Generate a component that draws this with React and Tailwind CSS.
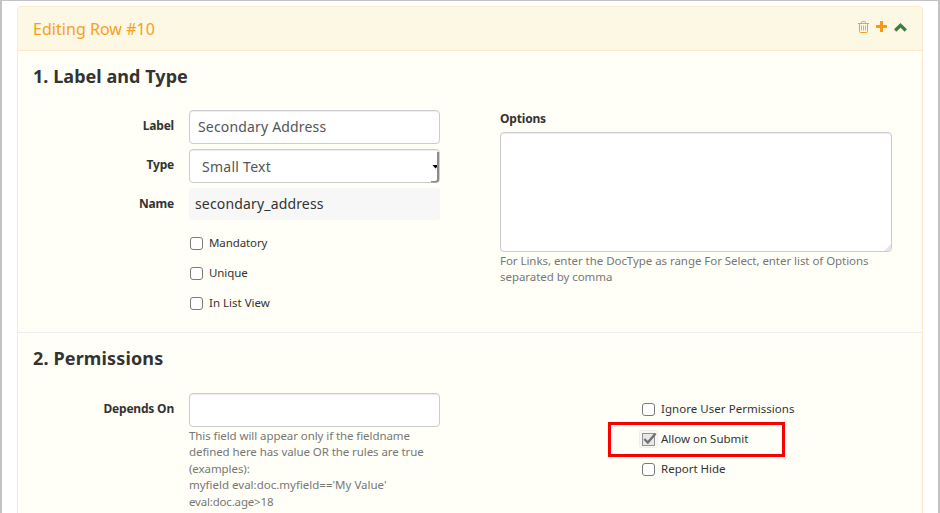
import React from "react";

function TrashIcon() {
  return (
    <svg className="mb-px h-[12px] w-[11px] shrink-0" viewBox="0 0 11 12" fill="none" stroke="#f5a11e">
      <path d="M0 2.5H11" />
      <path d="M3.5 2.5V1.3Q3.5 0.5 4.3 0.5H6.7Q7.5 0.5 7.5 1.3V2.5" />
      <path d="M1.5 3V10.5Q1.5 11.5 2.5 11.5H8.5Q9.5 11.5 9.5 10.5V3" />
      <path d="M3.5 4.5V9.5M5.5 4.5V9.5M7.5 4.5V9.5" strokeWidth="0.9" />
    </svg>
  );
}

function PlusIcon() {
  return (
    <svg className="h-[11px] w-[11px] shrink-0" viewBox="0 0 11 11" fill="#f7981c">
      <path d="M4 0.5Q4 0 4.5 0H6.5Q7 0 7 0.5V4H10.5Q11 4 11 4.5V6.5Q11 7 10.5 7H7V10.5Q7 11 6.5 11H4.5Q4 11 4 10.5V7H0.5Q0 7 0 6.5V4.5Q0 4 0.5 4H4Z" />
    </svg>
  );
}

function ChevronIcon() {
  return (
    <svg className="h-[9px] w-[13px] shrink-0" viewBox="0 0 13 9" fill="none" stroke="#3a8040" strokeWidth="3.2">
      <path d="M1.2 7.5L6.5 2.3L11.8 7.5" />
    </svg>
  );
}

function CheckRow({ children, checked }) {
  return (
    <label className="flex h-[30px] items-center text-[11.5px]">
      {checked ? (
        <span className="-ml-[2px] mr-[3px] flex h-[18px] w-[19px] items-center rounded-[2px] border border-[#eeeeec] bg-[#f8f8f3] pl-px">
          <svg className="h-[14px] w-[16px] shrink-0" viewBox="0 0 16 14" fill="none">
            <rect x="1.5" y="1.5" width="12" height="12" fill="#e8e8e8" stroke="#333" strokeDasharray="1 1" />
            <path d="M3.3 7L6.8 10.6L14.6 1.4" stroke="#707070" strokeWidth="2.3" />
          </svg>
        </span>
      ) : (
        <span className="mr-[6px] ml-px h-[13px] w-[13px] rounded-[3px] border border-[#7b7b7b] bg-white" />
      )}
      <span className="whitespace-nowrap text-[#333]">{children}</span>
    </label>
  );
}

function Field({ label, children }) {
  return (
    <div className="flex">
      <div className="mr-[15px] h-8 w-[141px] text-right text-[12px] font-bold leading-8 tracking-[-0.2px] text-[#333]">{label}</div>
      {children}
    </div>
  );
}

const box = "border border-[#ccc] rounded-[4px] bg-white shadow-[inset_0_1px_1px_rgba(0,0,0,0.075)]";

export default function App() {
  return (
    <div className="h-[513px] w-[940px] overflow-hidden border-x-2 border-t border-[#c3c3c3] bg-white pl-[15px] pt-[5px] font-['Noto_Sans',sans-serif] text-[#333]">
      <div className="h-[520px] w-[906px] rounded-t-[4px] border border-[#faebcc] bg-[#fffff8]">
        <header className="flex h-[44px] items-center rounded-t-[3px] border-b border-[#faebcc] bg-[#fcf8e3] pl-[15px] pr-[15px]">
          <h1 className="text-[16px] tracking-[0.04px] text-[#f5a11e]">Editing Row #10</h1>
          <div className="mb-[2px] ml-auto flex items-center">
            <TrashIcon />
            <span className="mb-[2px] ml-[7px]"><PlusIcon /></span>
            <span className="ml-[7px]"><ChevronIcon /></span>
          </div>
        </header>

        <section className="h-[282px] border-b border-[#eee] pl-[15px] pt-[13px]">
          <h2 className="h-[24px] text-[18px] font-bold leading-[24px] tracking-[0.05px]">1. Label and Type</h2>
          <div className="flex pt-[22px]">
            <div className="w-[407px]">
              <Field label="Label">
                <div className={`${box} h-[34px] w-[251px] pl-2 text-[14px] leading-[32px] tracking-[0.17px] text-[#555]`}>Secondary Address</div>
              </Field>
              <div className="pt-[5px]">
                <Field label="Type">
                  <div className={`${box} relative h-[34px] w-[251px] pl-3 text-[14px] leading-[33px] tracking-[0.27px] text-[#555]`}>
                    Small Text
                    <svg className="absolute right-0 top-px h-[32px] w-[8px]" viewBox="0 0 8 32">
                      <path d="M0 31.5V30H4Q6 30 6 28V1H8V29Q8 31.5 5 31.5H0Z" fill="#8c8c8c" />
                      <path d="M1.5 14H6V16L4.5 17.5Z" fill="#000" />
                    </svg>
                  </div>
                </Field>
              </div>
              <div className="pt-[5px]">
                <Field label="Name">
                  <div className="h-[32px] w-[251px] rounded-[3px] bg-[#f7f7f7] pl-[6px] text-[14px] leading-[31px] tracking-[0.16px] text-[#333]">secondary_address</div>
                </Field>
              </div>
              <div className="pl-[156px] pt-[8px]">
                <CheckRow><span className="tracking-[-0.1px]">Mandatory</span></CheckRow>
                <CheckRow><span className="tracking-[-0.1px]">Unique</span></CheckRow>
                <CheckRow>In List View</CheckRow>
              </div>
            </div>
            <div className="ml-[60px] w-[392px]">
              <div className="h-[22px] pt-px text-[12px] font-bold leading-[16px] tracking-[-0.18px]">Options</div>
              <div className={`${box} relative h-[120px]`}>
                <svg className="absolute bottom-0 right-0 h-[7px] w-[7px]" viewBox="0 0 7 7">
                  <path d="M7 0V4Q7 7 4 7H0Z" fill="#e6e6e6" />
                </svg>
              </div>
              <p className="whitespace-nowrap pt-px text-[11.5px] leading-[16.4px] tracking-[-0.05px] text-[#777]">For Links, enter the DocType as range For Select, enter list of Options<br />separated by comma</p>
            </div>
          </div>
        </section>

        <section className="pl-[15px] pt-[13px]">
          <h2 className="h-[24px] text-[18px] font-bold leading-[24px] tracking-[0.14px]">2. Permissions</h2>
          <div className="flex pt-[23px]">
            <div className="w-[407px]">
              <Field label="Depends On">
                <div className="w-[251px]">
                  <div className={`${box} h-[34px]`} />
                  <p className="whitespace-nowrap pt-px text-[11.5px] leading-[16.4px] tracking-[-0.08px] text-[#777]">
                    This field will appear only if the fieldname<br />
                    defined here has value OR the rules are true<br />
                    (examples):<br />
                    <span className="tracking-normal">myfield eval:doc.myfield=='My Value'</span><br />
                    <span className="tracking-[-0.18px]">eval:doc.age&gt;18</span>
                  </p>
                </div>
              </Field>
            </div>
            <div className="relative ml-[201px] pt-px">
              <CheckRow><span className="tracking-[0.04px]">Ignore User Permissions</span></CheckRow>
              <CheckRow checked>Allow on Submit</CheckRow>
              <CheckRow>Report Hide</CheckRow>
              <div className="absolute -left-[33px] top-[29px] h-[35px] w-[177px] border-3 border-[#fa0000]" />
            </div>
          </div>
        </section>
      </div>
    </div>
  );
}
